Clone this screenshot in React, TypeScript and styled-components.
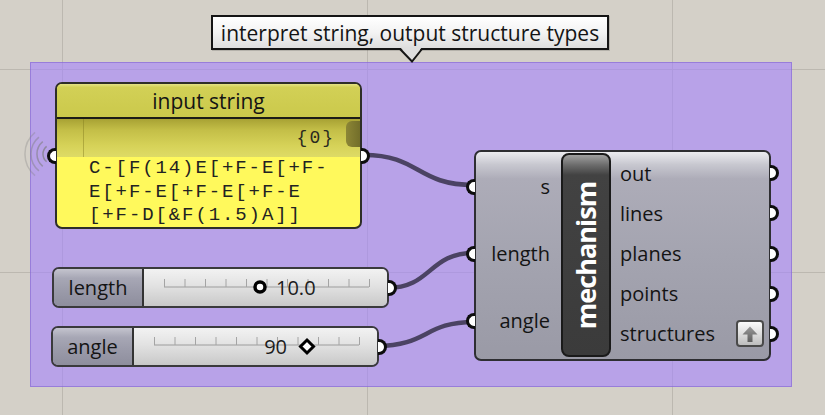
import React from "react";
import styled, { createGlobalStyle } from "styled-components";

const GlobalStyle = createGlobalStyle`
  html, body {
    margin: 0;
    padding: 0;
    background: #d4d0c8;
    overflow: hidden;
  }
  body {
    font-family: "Open Sans", "Noto Sans", sans-serif;
    color: #141414;
  }
`;

const Canvas = styled.div`
  position: relative;
  width: 825px;
  height: 415px;
  overflow: hidden;
  background-color: #d4d0c8;
  background-image:
    repeating-linear-gradient(90deg, transparent 0 62px, #bcb8b0 62px 63px, transparent 63px 305px),
    repeating-linear-gradient(180deg, transparent 0 69px, #bcb8b0 69px 70px, transparent 70px 101.5px);
`;

const Group = styled.div`
  position: absolute;
  left: 30px;
  top: 62px;
  width: 762px;
  height: 325px;
  box-sizing: border-box;
  background: rgba(165, 131, 253, 0.6);
  border: 1px solid rgba(125, 95, 205, 0.55);
`;

const Wires = styled.svg`
  position: absolute;
  left: 0;
  top: 0;
  width: 825px;
  height: 415px;
`;

// tooltip bubble
const Callout = styled.div`
  position: absolute;
  left: 211px;
  top: 15px;
  width: 398px;
  height: 35px;
  box-sizing: border-box;
  border: 2px solid #151515;
  background: linear-gradient(#ffffff, #f3f3f3 50%, #dedede);
  display: flex;
  align-items: center;
  justify-content: center;
  font-size: 21px;
  box-shadow: 1px 1px 0 rgba(0, 0, 0, 0.15);
`;

const CalloutTail = styled.svg`
  position: absolute;
  left: 185px;
  top: 28px;
  width: 26px;
  height: 20px;
  overflow: visible;
`;

// yellow text panel
const Panel = styled.div`
  position: absolute;
  left: 55px;
  top: 82px;
  width: 307px;
  height: 147px;
  box-sizing: border-box;
  border: 2px solid #2e2e28;
  border-radius: 7px;
  background: #fff95c;
  display: flex;
  flex-direction: column;
`;

const PanelTitle = styled.div`
  flex: none;
  height: 33px;
  border-radius: 5px 5px 0 0;
  border-bottom: 2px solid #1c1c16;
  background: linear-gradient(#e4e286 0, #d2d056 10%, #cbc94b 100%);
  display: flex;
  align-items: center;
  justify-content: center;
  font-size: 21px;
`;

const PanelIndex = styled.div`
  flex: none;
  height: 38px;
  display: flex;
  align-items: center;
  background: linear-gradient(#a8a234 0%, #c4bf48 30%, #d6d258 70%, #dedb66 100%);
`;

const Gutter = styled.div`
  width: 26px;
  align-self: stretch;
  border-right: 1px solid rgba(130, 125, 30, 0.45);
`;

const IndexText = styled.span`
  margin-left: auto;
  font-family: "Liberation Mono", monospace;
  font-size: 18px;
  letter-spacing: 2px;
  color: #2a2a20;
`;

const ScrollThumb = styled.div`
  align-self: flex-start;
  width: 14px;
  height: 26px;
  margin: 2px 0 0 11px;
  border-radius: 6px 0 0 6px;
  background: linear-gradient(90deg, #8c8636, #736e2a);
`;

const PanelBody = styled.div`
  flex: 1;
  padding-left: 32px;
  font-family: "Liberation Mono", monospace;
  font-size: 19px;
  letter-spacing: 1.9px;
  line-height: 23.5px;
  color: #222;
  white-space: pre;
`;

const Grip = styled.span<{ $side: "in" | "out" }>`
  position: absolute;
  top: 50%;
  transform: translateY(-50%);
  width: 9px;
  height: 16px;
  box-sizing: border-box;
  background: #fff;
  border: 3.5px solid #0d0d0d;
  ${(p) =>
    p.$side === "out"
      ? `right: -10px; border-left: none; border-radius: 0 9px 9px 0;`
      : `left: -10px; border-right: none; border-radius: 9px 0 0 9px;`}
`;

// number sliders
const Slider = styled.div<{ $left: number; $top: number }>`
  position: absolute;
  left: ${(p) => p.$left}px;
  top: ${(p) => p.$top}px;
  height: 41px;
  box-sizing: border-box;
  border: 2px solid #3a3a3c;
  border-radius: 7px;
  display: flex;
`;

const SliderName = styled.div<{ $w: number }>`
  width: ${(p) => p.$w}px;
  border-right: 2px solid #333;
  border-radius: 5px 0 0 5px;
  background: linear-gradient(#c4c4ce 0, #a7a7b5 25%, #9a9aa9 60%, #8e8e9d 100%);
  display: flex;
  align-items: center;
  justify-content: center;
  font-size: 20px;
`;

const SliderTrack = styled.div`
  position: relative;
  width: 243px;
  border-radius: 0 5px 5px 0;
  background: linear-gradient(#f2f2f2 0, #e2e2e2 45%, #d2d2d2 80%, #c8c8c8 100%);
`;

const Rail = styled.svg`
  position: absolute;
  left: 0;
  top: 0;
  width: 243px;
  height: 37px;
`;

const SliderValue = styled.span<{ $left?: number; $right?: number }>`
  position: absolute;
  top: 50%;
  transform: translateY(-52%);
  ${(p) => (p.$left !== undefined ? `left: ${p.$left}px;` : `right: ${p.$right}px;`)}
  font-size: 20px;
  color: #1c1c1c;
`;

// main component
const Component = styled.div`
  position: absolute;
  left: 474px;
  top: 150px;
  width: 297px;
  height: 211px;
  box-sizing: border-box;
  border: 2px solid #2e2e32;
  border-radius: 7px;
  background: linear-gradient(#ececf0 0, #c8c8d0 6%, #adacb8 13%, #a4a4b0 50%, #9a9aa6 100%);
  display: flex;
`;

const PortColumn = styled.div<{ $w?: number }>`
  ${(p) => (p.$w ? `width: ${p.$w}px;` : "flex: 1;")}
  display: flex;
  flex-direction: column;
  padding: 1px 0 5px;
`;

const PortRow = styled.div<{ $side: "in" | "out" }>`
  flex: 1;
  position: relative;
  display: flex;
  align-items: center;
  justify-content: ${(p) => (p.$side === "in" ? "flex-end" : "flex-start")};
  padding: ${(p) => (p.$side === "in" ? "0 11px 0 0" : "0 0 0 9px")};
  font-size: 20px;
`;

const Nameplate = styled.div`
  width: 50px;
  box-sizing: border-box;
  margin: 1px 0 2px;
  border: 2px solid #1a1a1a;
  border-radius: 8px;
  background: linear-gradient(#a0a0a0 0, #6c6c6c 5%, #424242 10%, #3b3b3b 100%);
  display: flex;
  align-items: center;
  justify-content: center;
  overflow: hidden;
`;

const NameText = styled.span`
  transform: rotate(-90deg);
  color: #fff;
  font-weight: 700;
  font-size: 27px;
  letter-spacing: -1px;
  white-space: nowrap;
`;

const ExpandButton = styled.div`
  width: 28px;
  height: 27px;
  box-sizing: border-box;
  margin-left: auto;
  margin-right: 5px;
  border: 2px solid #4a4a4a;
  border-radius: 4px;
  background: linear-gradient(#fbfbfb, #dedede 50%, #bdbdbd);
  display: flex;
  align-items: center;
  justify-content: center;
`;

const wire = "#4b4363";

const ticks = Array.from({ length: 11 }, (_, i) => 20 + i * 20.5);

const RailDrawing = ({ y }: { y: number }) => (
  <>
    <line x1={20} y1={y} x2={225} y2={y} stroke="#9c9c9c" strokeWidth={1} />
    {ticks.map((x) => (
      <line key={x} x1={x + 0.5} y1={y - 8} x2={x + 0.5} y2={y} stroke="#a4a4a4" strokeWidth={1} />
    ))}
  </>
);

const rings = [10, 16, 22, 28];

export default function App() {
  return (
    <Canvas>
      <GlobalStyle />
      <Group />

      <Wires>
        {rings.map((r, i) => {
          const cx = 53;
          const cy = 154;
          const dx = r * 0.64;
          const dy = r * 0.77;
          return (
            <path
              key={r}
              d={`M${cx - dx} ${cy - dy} A${r} ${r} 0 0 0 ${cx - dx} ${cy + dy}`}
              fill="none"
              stroke="#7d7d7d"
              strokeOpacity={0.7 - i * 0.13}
              strokeWidth={1.5}
            />
          );
        })}
        <path d="M364 155 C 420 155, 416 185, 474 185" fill="none" stroke={wire} strokeWidth={4.5} />
        <path d="M387 288 C 432 288, 428 253, 474 253" fill="none" stroke={wire} strokeWidth={4.5} />
        <path d="M377 346 C 428 346, 424 322, 474 322" fill="none" stroke={wire} strokeWidth={4.5} />
      </Wires>

      <Callout>
        interpret string, output structure types
        <CalloutTail>
          <polygon points="2,2 24,2 14,16" fill="#dedede" />
          <polyline points="2,4 14,16.5 24,4" fill="none" stroke="#151515" strokeWidth={2} />
        </CalloutTail>
      </Callout>

      <Panel>
        <Grip $side="in" />
        <PanelTitle>input string</PanelTitle>
        <PanelIndex>
          <Gutter />
          <IndexText>{"{0}"}</IndexText>
          <ScrollThumb />
        </PanelIndex>
        <PanelBody>
          {"C-[F(14)E[+F-E[+F-\nE[+F-E[+F-E[+F-E\n[+F-D[&F(1.5)A]]"}
        </PanelBody>
        <Grip $side="out" />
      </Panel>

      <Slider $left={52} $top={267}>
        <SliderName $w={88}>length</SliderName>
        <SliderTrack>
          <Rail viewBox="0 0 243 37">
            <RailDrawing y={18} />
            <circle cx={116} cy={18} r={5} fill="#fff" stroke="#000" strokeWidth={3.5} />
          </Rail>
          <SliderValue $left={132}>10.0</SliderValue>
        </SliderTrack>
        <Grip $side="out" />
      </Slider>

      <Slider $left={51} $top={326}>
        <SliderName $w={79}>angle</SliderName>
        <SliderTrack>
          <Rail viewBox="0 0 243 37">
            <RailDrawing y={17} />
            <polygon
              points="173,12 179.5,18.5 173,25 166.5,18.5"
              fill="#fff"
              stroke="#000"
              strokeWidth={3}
              strokeLinejoin="miter"
            />
          </Rail>
          <SliderValue $right={90}>90</SliderValue>
        </SliderTrack>
        <Grip $side="out" />
      </Slider>

      <Component>
        <PortColumn $w={85}>
          {["s", "length", "angle"].map((name) => (
            <PortRow key={name} $side="in">
              <Grip $side="in" />
              {name}
            </PortRow>
          ))}
        </PortColumn>
        <Nameplate>
          <NameText>mechanism</NameText>
        </Nameplate>
        <PortColumn>
          {["out", "lines", "planes", "points", "structures"].map((name) => (
            <PortRow key={name} $side="out">
              {name}
              {name === "structures" && (
                <ExpandButton>
                  <svg width="18" height="18" viewBox="0 0 18 18">
                    <defs>
                      <linearGradient id="arrowFill" x1="0" y1="0" x2="0" y2="1">
                        <stop offset="0" stopColor="#9a9a9a" />
                        <stop offset="1" stopColor="#5e5e5e" />
                      </linearGradient>
                    </defs>
                    <path d="M9 1.5 L16.5 9.5 H11.5 V17 H6.5 V9.5 H1.5 Z" fill="url(#arrowFill)" />
                  </svg>
                </ExpandButton>
              )}
              <Grip $side="out" />
            </PortRow>
          ))}
        </PortColumn>
      </Component>
    </Canvas>
  );
}
